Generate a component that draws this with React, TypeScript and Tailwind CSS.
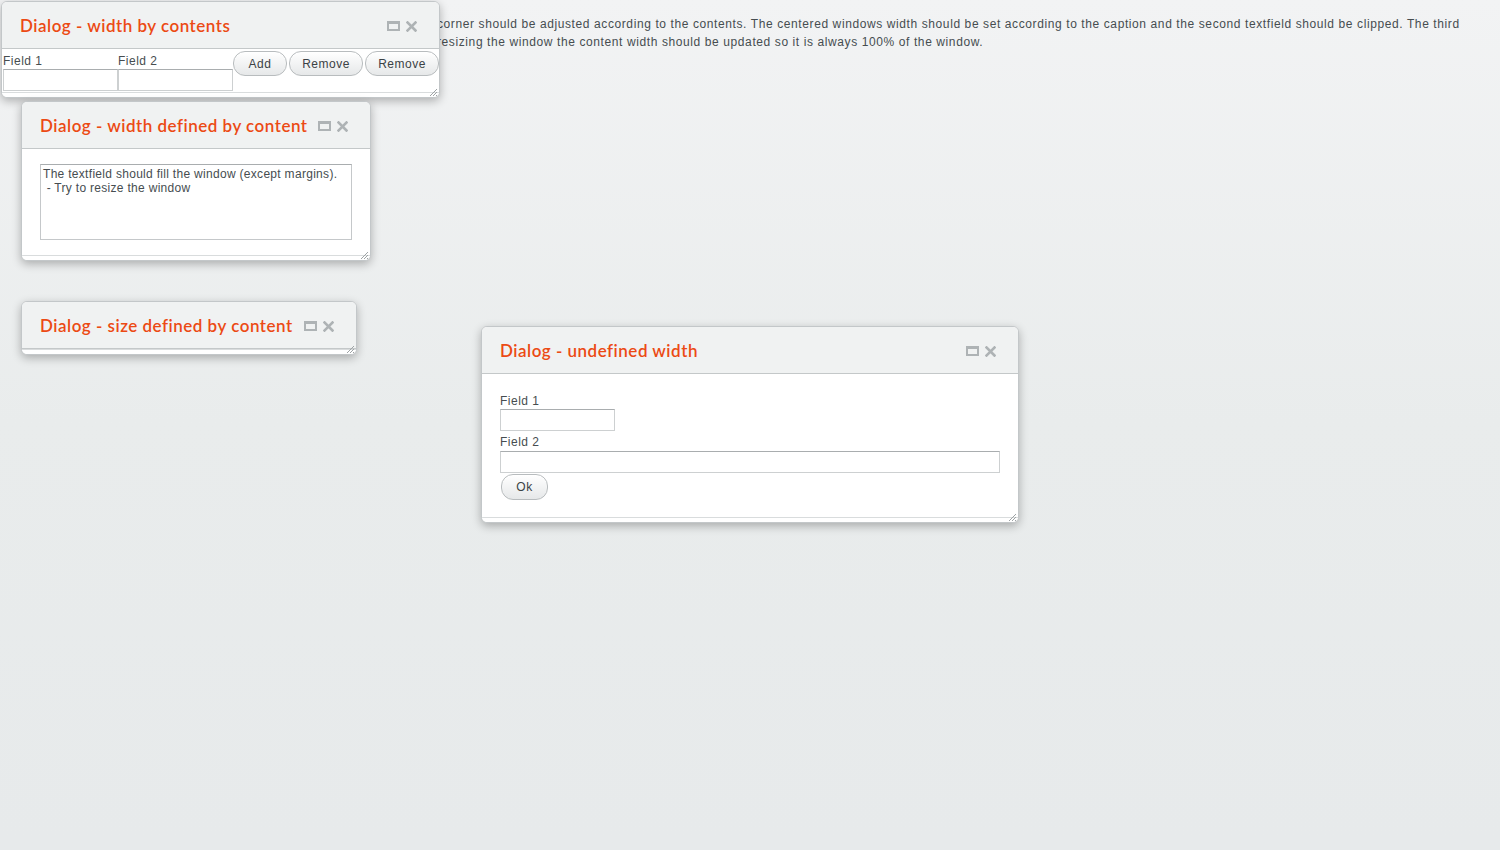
import React from "react";

const CAP = { fontFamily: "Lato, 'Open Sans', sans-serif" };
const BODY = { fontFamily: "'Liberation Sans', Arial, sans-serif" };

function MaxIcon() {
  return (
    <svg width="13" height="10" viewBox="0 0 13 10" className="block">
      <path d="M0 0 H13 V10 H0 Z M2 3 V8 H11 V3 Z" fill="#aeb3b5" fillRule="evenodd" />
    </svg>
  );
}

function CloseIcon() {
  return (
    <svg width="11" height="11" viewBox="0 0 11 11" className="block">
      <path d="M1.5 1.5 L9.5 9.5 M9.5 1.5 L1.5 9.5" stroke="#aeb3b5" strokeWidth="2.6" strokeLinecap="square" />
    </svg>
  );
}

function Resize() {
  return (
    <svg width="10" height="10" viewBox="0 0 10 10" className="block">
      <path d="M9 2 L2 9 M9 5 L5 9 M9 8 L8 9" stroke="#9ea3a5" strokeWidth="1" />
    </svg>
  );
}

function Win({
  className,
  caption,
  children,
}: {
  className: string;
  caption: string;
  children?: React.ReactNode;
}) {
  return (
    <div
      className={
        "absolute flex flex-col rounded-[6px] border border-[#c3c7c9] bg-white overflow-hidden shadow-[0_3px_10px_rgba(0,0,0,0.28)] " +
        className
      }
    >
      <div className="flex items-center h-[47px] shrink-0 pl-[18px] pr-[22px] pt-[2px] bg-[#f0f2f2] border-b border-[#c4c8c9]">
        <div
          className="flex-1 whitespace-nowrap overflow-hidden text-[17px] font-semibold tracking-[0.5px] text-[#ec4a14] leading-[20px]"
          style={CAP}
        >
          {caption}
        </div>
        <div className="flex items-center gap-[6px] ml-[6px]">
          <MaxIcon />
          <CloseIcon />
        </div>
      </div>
      {children}
      <div className="relative h-[5px] shrink-0 border-t border-[#d9dcdd] bg-white">
        <div className="absolute right-[1px] bottom-[0px]">
          <Resize />
        </div>
      </div>
    </div>
  );
}

function Btn({ label, w }: { label: string; w: string }) {
  return (
    <div
      className={
        "flex items-center justify-center h-[25px] rounded-[12px] border border-[#b8bcbe] bg-gradient-to-b from-white to-[#e6e8e9] text-[12px] tracking-[0.5px] text-[#3b4245] shadow-[inset_0_1px_0_#ffffff] " +
        w
      }
      style={BODY}
    >
      {label}
    </div>
  );
}

function Field({ w }: { w: string }) {
  return (
    <div
      className={
        "h-[22px] bg-white border border-[#cdd0d1] border-t-[#a9adaf] " + w
      }
    />
  );
}

export default function App() {
  return (
    <div className="relative w-full h-[850px] overflow-hidden bg-gradient-to-b from-[#f2f3f4] via-[#e9ecec] via-50% to-[#e7eaeb]">
      <div
        className="pl-[437px] pt-[15px] text-[12px] leading-[18px] tracking-[0.6px] text-[#464d50] whitespace-nowrap"
        style={BODY}
      >
        <div>
          corner should be adjusted according to the contents. The centered windows width should be set according to the caption and the second textfield should be clipped. The third
        </div>
        <div>
          resizing the window the content width should be updated so it is always 100% of the window.
        </div>
      </div>

      {/* Window 1 */}
      <Win className="left-[1px] top-[1px] w-[439px]" caption="Dialog - width by contents">
        <div className="flex items-start h-[43px] pl-[1px] text-[12px] tracking-[0.5px] text-[#464d50]" style={BODY}>
          <div className="flex flex-col w-[115px]">
            <div className="h-[19px] pt-[4px] leading-[16px]">Field 1</div>
            <Field w="w-[115px] mt-[1px]" />
          </div>
          <div className="flex flex-col w-[115px]">
            <div className="h-[19px] pt-[4px] leading-[16px]">Field 2</div>
            <Field w="w-[115px] mt-[1px]" />
          </div>
          <div className="flex gap-[2px] mt-[2px]">
            <Btn label="Add" w="w-[54px]" />
            <Btn label="Remove" w="w-[74px]" />
            <Btn label="Remove" w="w-[74px]" />
          </div>
        </div>
      </Win>

      {/* Window 2 */}
      <Win className="left-[21px] top-[101px] w-[350px]" caption="Dialog - width defined by content">
        <div className="px-[18px] pt-[15px] pb-[15px]">
          <div
            className="h-[76px] w-full border border-[#c5c8ca] border-t-[#a9adaf] px-[2px] pt-[2px] text-[12px] leading-[14px] tracking-[0.3px] text-[#464d50] whitespace-pre"
            style={BODY}
          >
            {"The textfield should fill the window (except margins).\n - Try to resize the window"}
          </div>
        </div>
      </Win>

      {/* Window 3 */}
      <Win className="left-[21px] top-[301px] w-[336px]" caption="Dialog - size defined by content" />

      {/* Window 4 */}
      <Win className="left-[481px] top-[326px] w-[538px]" caption="Dialog - undefined width">
        <div className="flex flex-col pl-[18px] pr-[18px] pt-[18px] pb-[17px] text-[12px] tracking-[0.5px] text-[#464d50]" style={BODY}>
          <div className="h-[17px] leading-[16px] pt-[1px]">Field 1</div>
          <Field w="w-[115px]" />
          <div className="h-[20px] leading-[16px] pt-[3px]">Field 2</div>
          <Field w="w-[500px]" />
          <div className="mt-[1px] ml-[1px]">
            <Btn label="Ok" w="w-[47px] h-[26px]" />
          </div>
        </div>
      </Win>
    </div>
  );
}
